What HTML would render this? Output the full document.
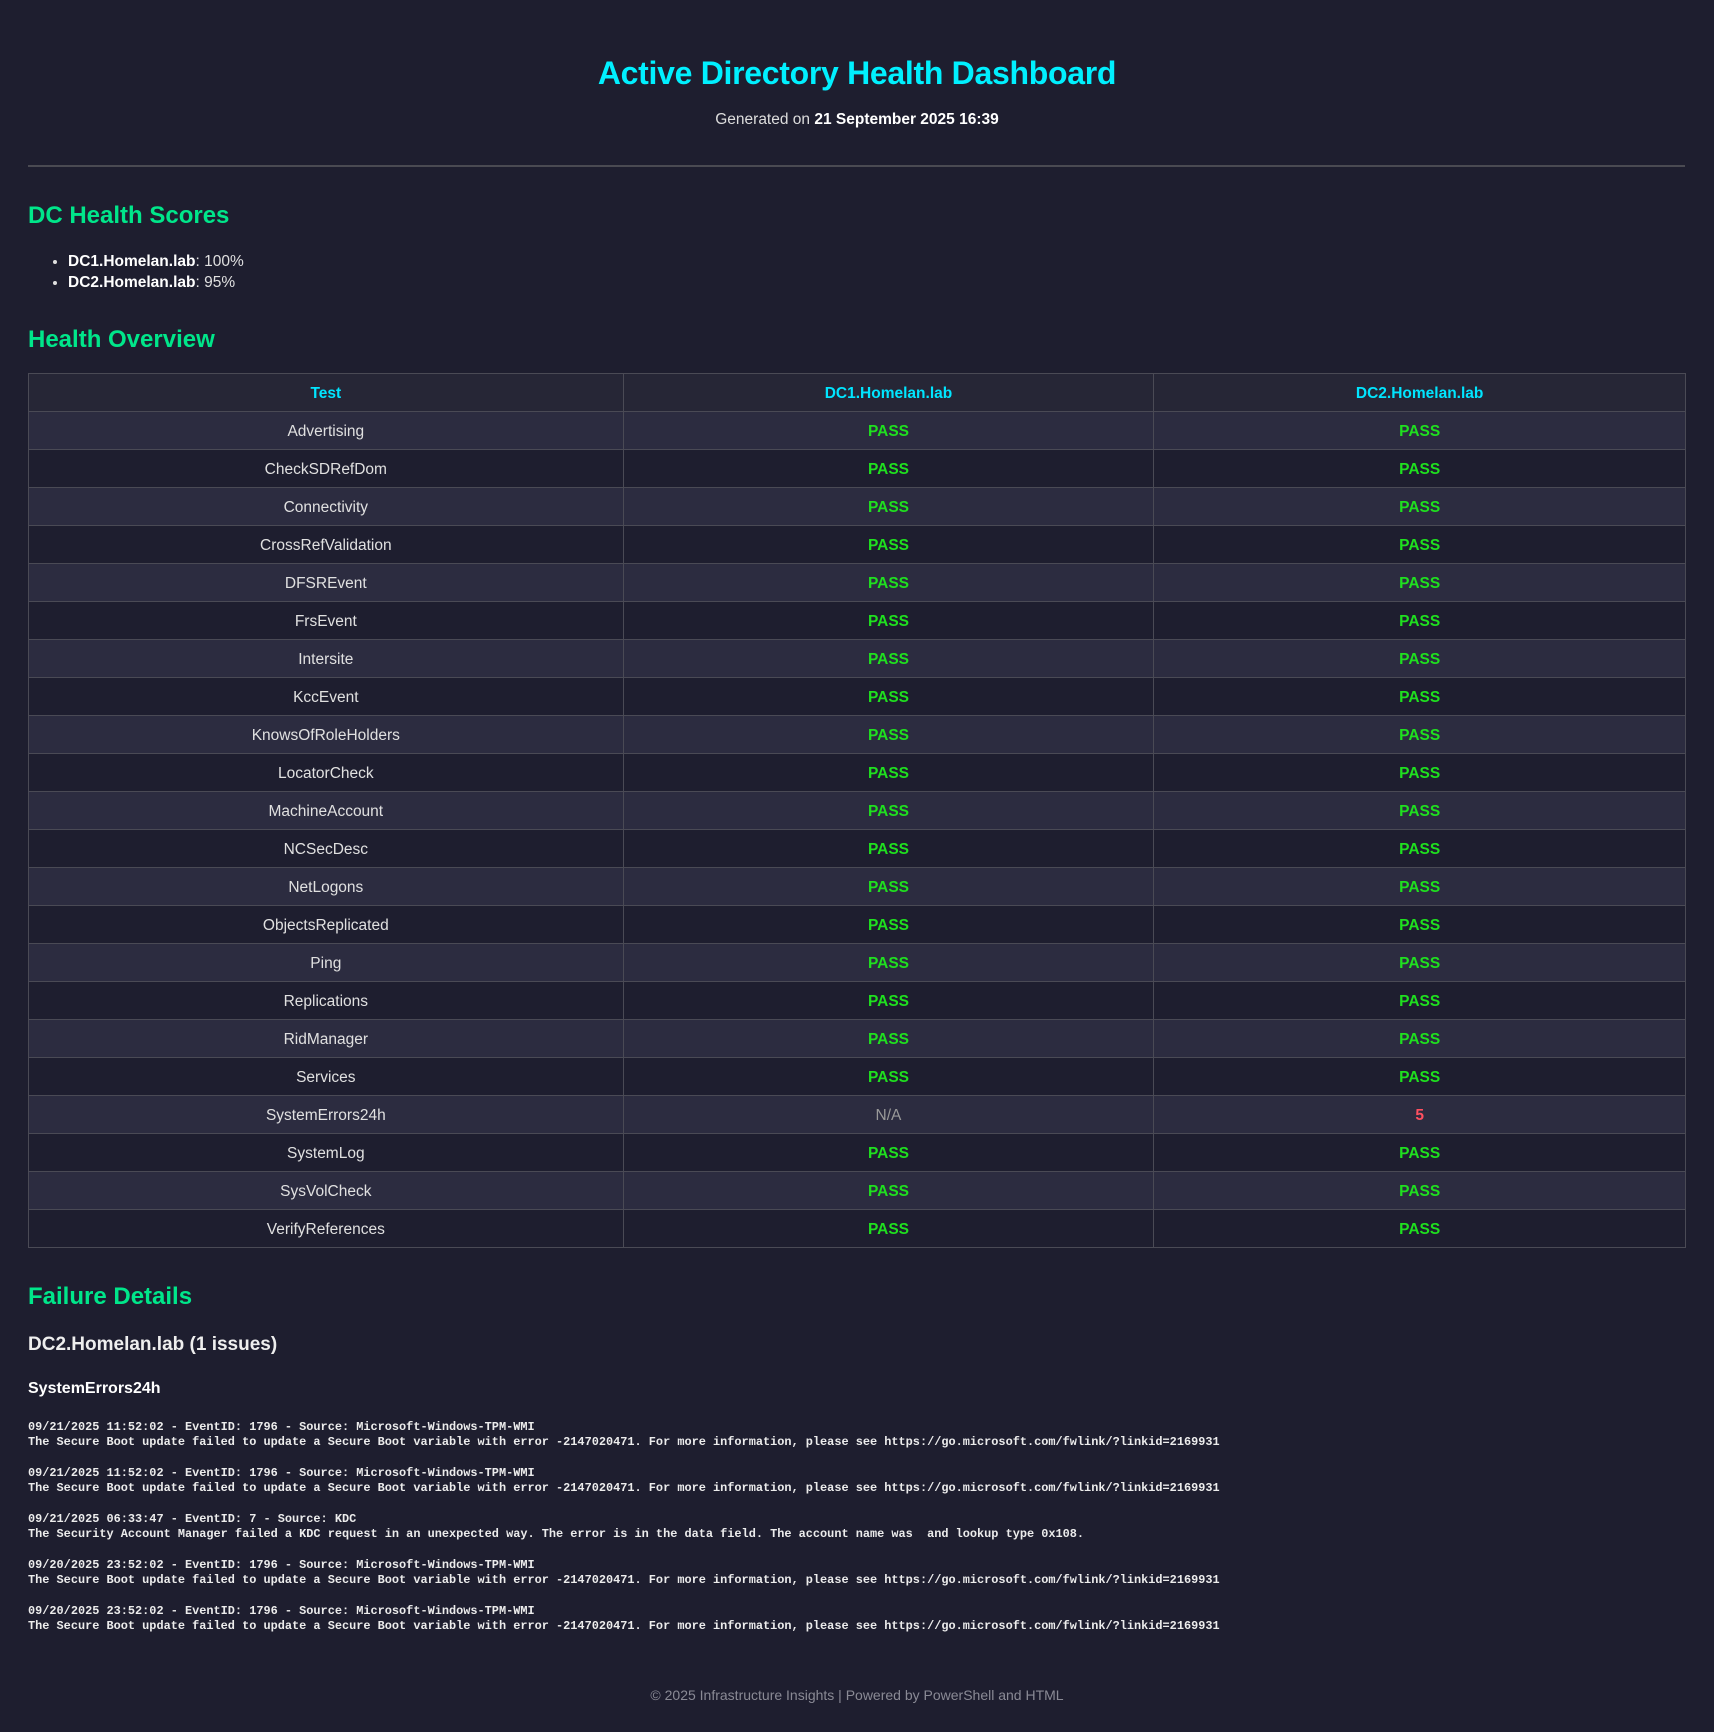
<!DOCTYPE html>
<html><head><meta charset="utf-8"><style>
*{margin:0;padding:0;box-sizing:border-box}
html,body{width:1714px;height:1732px;background:#1e1e2f;color:#e0e0e0;font-family:"Liberation Sans",sans-serif;overflow:hidden}
.wrap{position:relative;width:1714px;height:1732px}
.a{position:absolute;left:28px;white-space:nowrap}
h1{position:absolute;left:0;width:1714px;text-align:center;top:55px;font-size:32px;color:#00f0ff;font-weight:bold;letter-spacing:-0.3px}
.gen{position:absolute;left:0;width:1714px;text-align:center;top:111px;font-size:15.5px;color:#ddd}
.gen b{color:#fff}
hr{position:absolute;left:28px;width:1657px;top:165px;border:0;border-top:2px solid #4a4a52}
h2{font-size:24px;color:#00e68a;font-weight:bold}
ul{position:absolute;left:68px;top:251px;font-size:15.5px;line-height:21px}
ul b{color:#fff}
table{position:absolute;left:28px;top:373px;width:1658px;border-collapse:collapse;font-size:15.5px;text-align:center}
td,th{border:1px solid #4a4a55;height:38px;padding:2px 0 0}
th{background:#262636;color:#00e5ff;font-weight:bold}
tr:nth-child(even) td{background:#2c2c40}
tr:nth-child(odd) td{background:#1e1e2f}
.p{color:#1fe01f;font-weight:bold}
.n{color:#999}
.r{color:#ff5060;font-weight:bold}
pre{position:absolute;left:28px;top:1420px;font-family:"Liberation Mono",monospace;font-size:11.9px;line-height:15.3px;color:#ececec;font-weight:bold}
.f{position:absolute;left:0;width:1714px;text-align:center;top:1687px;font-size:14px;color:#8a8a95}
</style></head><body><div class="wrap">
<h1>Active Directory Health Dashboard</h1>
<div class="gen">Generated on <b>21 September 2025 16:39</b></div>
<hr>
<h2 class="a" style="top:202px">DC Health Scores</h2>
<ul><li><b>DC1.Homelan.lab</b>: 100%</li><li><b>DC2.Homelan.lab</b>: 95%</li></ul>
<h2 class="a" style="top:326px">Health Overview</h2>
<table>
<colgroup><col style="width:595px"><col style="width:531px"><col style="width:532px"></colgroup>
<tr><th>Test</th><th>DC1.Homelan.lab</th><th>DC2.Homelan.lab</th></tr>
<tr><td>Advertising</td><td class="p">PASS</td><td class="p">PASS</td></tr>
<tr><td>CheckSDRefDom</td><td class="p">PASS</td><td class="p">PASS</td></tr>
<tr><td>Connectivity</td><td class="p">PASS</td><td class="p">PASS</td></tr>
<tr><td>CrossRefValidation</td><td class="p">PASS</td><td class="p">PASS</td></tr>
<tr><td>DFSREvent</td><td class="p">PASS</td><td class="p">PASS</td></tr>
<tr><td>FrsEvent</td><td class="p">PASS</td><td class="p">PASS</td></tr>
<tr><td>Intersite</td><td class="p">PASS</td><td class="p">PASS</td></tr>
<tr><td>KccEvent</td><td class="p">PASS</td><td class="p">PASS</td></tr>
<tr><td>KnowsOfRoleHolders</td><td class="p">PASS</td><td class="p">PASS</td></tr>
<tr><td>LocatorCheck</td><td class="p">PASS</td><td class="p">PASS</td></tr>
<tr><td>MachineAccount</td><td class="p">PASS</td><td class="p">PASS</td></tr>
<tr><td>NCSecDesc</td><td class="p">PASS</td><td class="p">PASS</td></tr>
<tr><td>NetLogons</td><td class="p">PASS</td><td class="p">PASS</td></tr>
<tr><td>ObjectsReplicated</td><td class="p">PASS</td><td class="p">PASS</td></tr>
<tr><td>Ping</td><td class="p">PASS</td><td class="p">PASS</td></tr>
<tr><td>Replications</td><td class="p">PASS</td><td class="p">PASS</td></tr>
<tr><td>RidManager</td><td class="p">PASS</td><td class="p">PASS</td></tr>
<tr><td>Services</td><td class="p">PASS</td><td class="p">PASS</td></tr>
<tr><td>SystemErrors24h</td><td class="n">N/A</td><td class="r">5</td></tr>
<tr><td>SystemLog</td><td class="p">PASS</td><td class="p">PASS</td></tr>
<tr><td>SysVolCheck</td><td class="p">PASS</td><td class="p">PASS</td></tr>
<tr><td>VerifyReferences</td><td class="p">PASS</td><td class="p">PASS</td></tr>
</table>
<h2 class="a" style="top:1283px">Failure Details</h2>
<div class="a" style="top:1334px;font-size:19px;font-weight:bold;color:#eee">DC2.Homelan.lab (1 issues)</div>
<div class="a" style="top:1380px;font-size:16px;font-weight:bold;color:#fff">SystemErrors24h</div>
<pre>09/21/2025 11:52:02 - EventID: 1796 - Source: Microsoft-Windows-TPM-WMI
The Secure Boot update failed to update a Secure Boot variable with error -2147020471. For more information, please see https://go.microsoft.com/fwlink/?linkid=2169931

09/21/2025 11:52:02 - EventID: 1796 - Source: Microsoft-Windows-TPM-WMI
The Secure Boot update failed to update a Secure Boot variable with error -2147020471. For more information, please see https://go.microsoft.com/fwlink/?linkid=2169931

09/21/2025 06:33:47 - EventID: 7 - Source: KDC
The Security Account Manager failed a KDC request in an unexpected way. The error is in the data field. The account name was  and lookup type 0x108.

09/20/2025 23:52:02 - EventID: 1796 - Source: Microsoft-Windows-TPM-WMI
The Secure Boot update failed to update a Secure Boot variable with error -2147020471. For more information, please see https://go.microsoft.com/fwlink/?linkid=2169931

09/20/2025 23:52:02 - EventID: 1796 - Source: Microsoft-Windows-TPM-WMI
The Secure Boot update failed to update a Secure Boot variable with error -2147020471. For more information, please see https://go.microsoft.com/fwlink/?linkid=2169931</pre>
<div class="f">© 2025 Infrastructure Insights | Powered by PowerShell and HTML</div>
</div></body></html>
